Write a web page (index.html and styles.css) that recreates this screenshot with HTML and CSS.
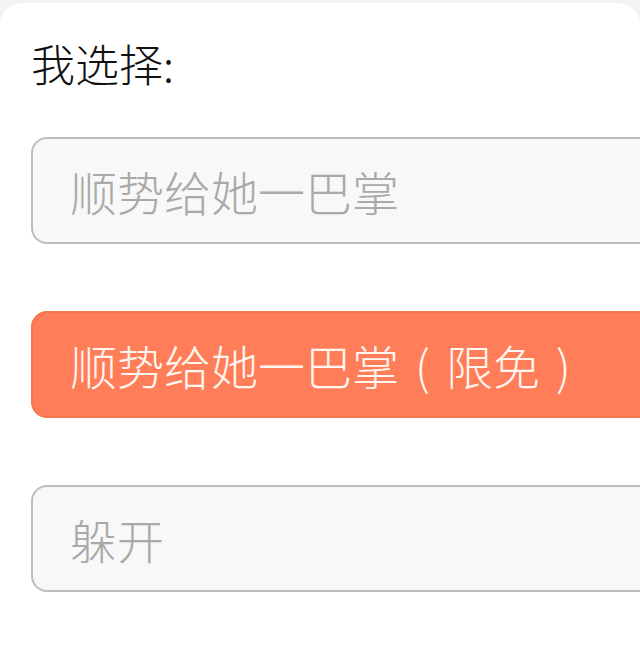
FILE: index.html
```html
<!DOCTYPE html>
<html lang="zh">
<head>
    <meta charset="UTF-8">
    <meta name="viewport" content="width=device-width, initial-scale=1.0">
    <title>我选择</title>
    <link rel="stylesheet" href="styles.css">
</head>
<body>
    <div class="card">
        <div class="label">我选择:</div>
        <div class="option">顺势给她一巴掌</div>
        <div class="option option-hot">顺势给她一巴掌<span class="paren">(</span>限免<span class="paren">)</span></div>
        <div class="option">躲开</div>
    </div>
</body>
</html>
```

FILE: styles.css
```css
body {
    margin: 0;
    background-color: #f3f3f3;
    font-family: "Noto Sans CJK SC", "Noto Sans", sans-serif;
    font-weight: 300;
    overflow: hidden;
}
.card {
    margin-top: 3px;
    min-height: 646px;
    background: white;
    border-radius: 22px 22px 0 0;
    padding: 30px 0 0 31px;
    box-sizing: border-box;
}
.label {
    font-size: 44px;
    line-height: 60px;
    color: #111;
    margin-bottom: 44px;
}
.option {
    display: flex;
    align-items: center;
    box-sizing: border-box;
    height: 107px;
    margin-right: -40px;
    margin-bottom: 67px;
    padding-left: 37px;
    border: 2px solid #bdbdbd;
    border-radius: 16px;
    background: #f8f8f8;
    color: #a9a9a9;
    font-size: 47px;
}
.option-hot {
    background: #ff7d59;
    border-color: #f3774f;
    color: #fff6ef;
}
.paren {
    display: inline-block;
    width: 1em;
    text-align: center;
}
```
